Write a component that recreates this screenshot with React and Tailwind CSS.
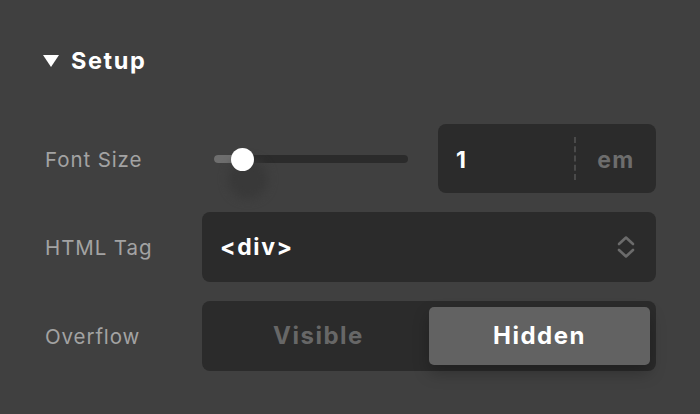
import React from "react";

function Chevrons() {
  return (
    <svg width="18" height="24" viewBox="0 0 18 24" fill="none" stroke="#6b6b6b" strokeWidth="2.6" strokeLinecap="round" strokeLinejoin="round">
      <path d="M2 9 L9 2.5 L16 9" />
      <path d="M2 15 L9 21.5 L16 15" />
    </svg>
  );
}

export default function App() {
  return (
    <div className="w-[700px] h-[414px] bg-[#404040] pl-[43px] pt-[47px] font-['Inter',sans-serif] overflow-hidden">
      <div className="flex items-center gap-[12px] h-[28px]">
        <div className="w-0 h-0 border-l-[8px] border-r-[8px] border-t-[12px] border-l-transparent border-r-transparent border-t-white" />
        <span className="text-white font-bold text-[23.5px] tracking-[1.6px]">Setup</span>
      </div>

      <div className="flex flex-col gap-[19px] mt-[49px] pl-[2px]">
        <div className="flex items-center h-[69px]">
          <span className="w-[157px] pt-[3px] text-[#a3a3a3] text-[20.5px] tracking-[0.9px]">Font Size</span>
          <div className="w-[236px] pl-[12px] pr-[30px] flex items-center">
            <div className="relative w-[194px] h-[8px] rounded-full bg-[#2b2b2b]">
              <div className="absolute left-0 top-0 h-[8px] w-[30px] rounded-l-full bg-[#6e6e6e]" />
              <div className="absolute left-[14px] top-[4px] w-[40px] h-[40px] rounded-full bg-[#393939] blur-[5px]" />
              <div className="absolute left-[17px] top-[-7px] w-[23px] h-[23px] rounded-full bg-white" />
            </div>
          </div>
          <div className="w-[218px] h-[69px] rounded-[8px] bg-[#2b2b2b] flex items-center">
            <span className="flex-1 pl-[18px] pt-[3px] text-white font-bold text-[23px]">1</span>
            <div className="h-[43px] border-l-[2px] border-dashed border-[#4a4a4a]" />
            <span className="w-[80px] pt-[3px] text-center text-[#6d6d6d] font-bold text-[23px] tracking-[1.5px]">em</span>
          </div>
        </div>

        <div className="flex items-center h-[70px]">
          <span className="w-[157px] pt-[3px] text-[#a3a3a3] text-[20.5px] tracking-[0.9px]">HTML Tag</span>
          <div className="w-[454px] h-[70px] rounded-[8px] bg-[#2b2b2b] flex items-center justify-between pl-[18px] pr-[21px]">
            <span className="text-white font-bold text-[23px] tracking-[1.6px]">&lt;div&gt;</span>
            <Chevrons />
          </div>
        </div>

        <div className="flex items-center h-[70px]">
          <span className="w-[157px] pt-[3px] text-[#a3a3a3] text-[20.5px] tracking-[0.9px]">Overflow</span>
          <div className="w-[454px] h-[70px] rounded-[8px] bg-[#2b2b2b] flex items-center p-[6px]">
            <div className="flex-1 text-center text-[#676767] font-bold text-[24px] tracking-[1.5px]">Visible</div>
            <div className="w-[221px] h-[58px] rounded-[5px] bg-[#626262] flex items-center justify-center text-white font-bold text-[24px] tracking-[1.5px] shadow-[0_8px_16px_rgba(0,0,0,0.25)]">Hidden</div>
          </div>
        </div>
      </div>
    </div>
  );
}
